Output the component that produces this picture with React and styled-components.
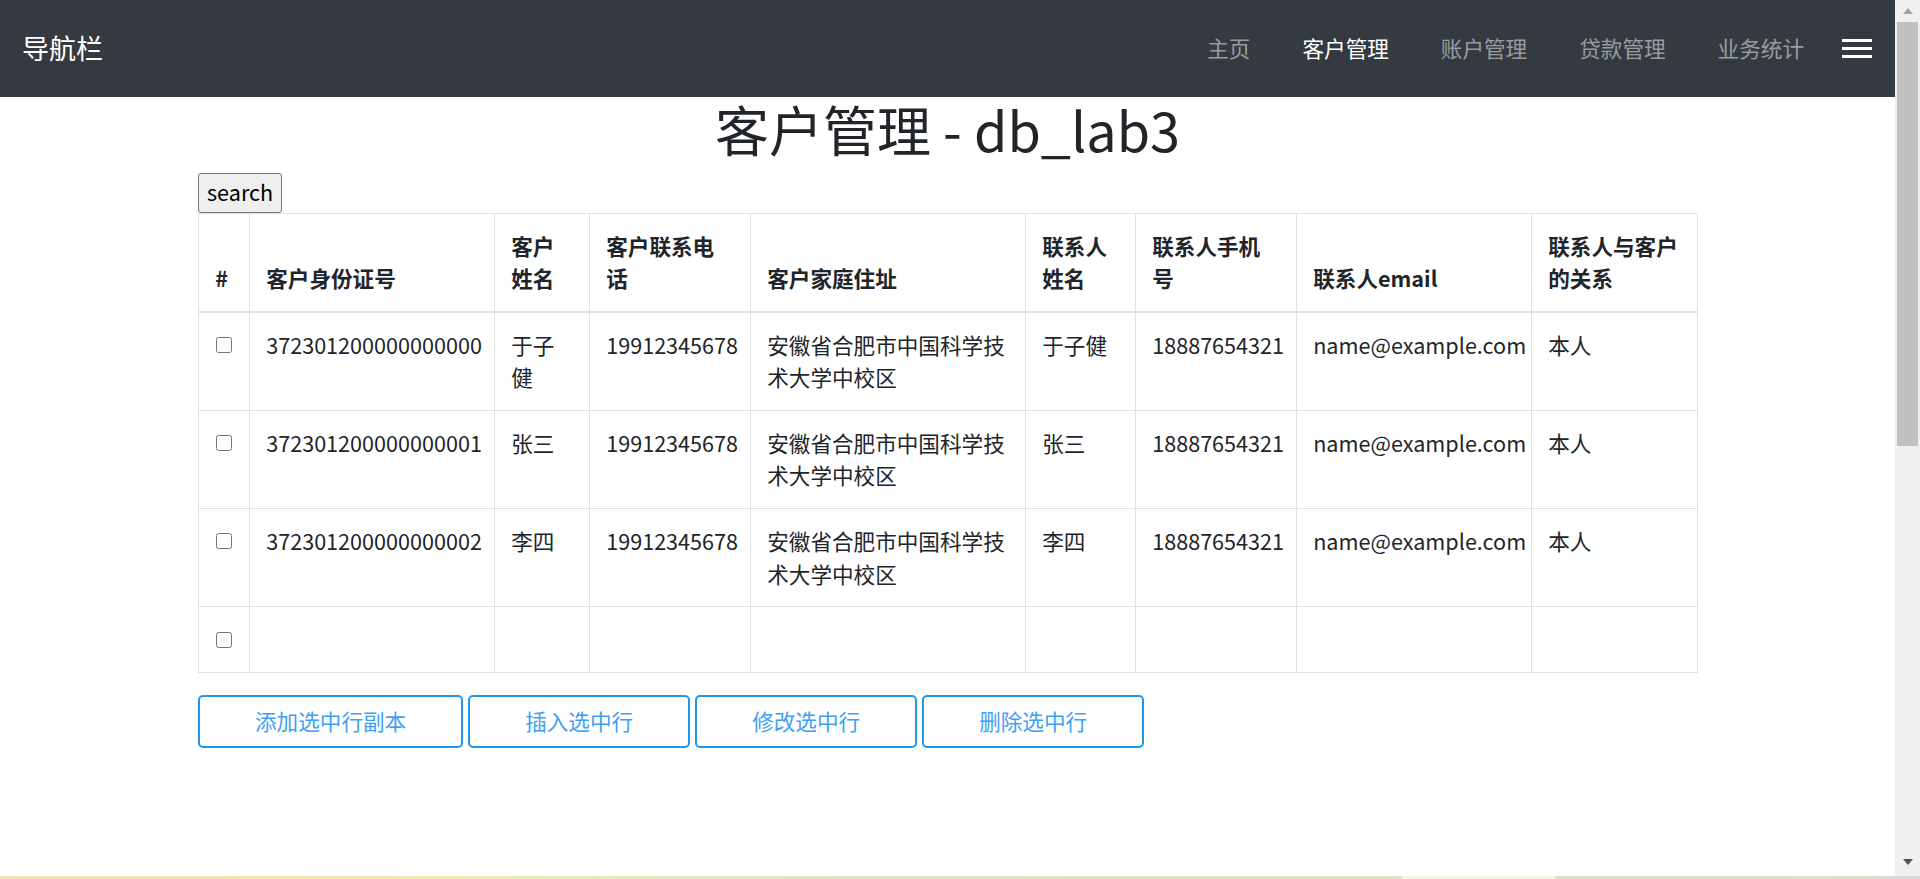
import React from 'react';
import styled, { createGlobalStyle } from 'styled-components';

const GlobalStyle = createGlobalStyle`
  *, *::before, *::after { box-sizing: border-box; }
  html, body { margin: 0; padding: 0; height: 100%; overflow: hidden; background: #fff; }
  body {
    font-family: "Noto Sans CJK SC", "Noto Sans", sans-serif;
    font-size: 21.6px;
    line-height: 1.5;
    color: #212529;
  }
  #root { height: 100%; }
`;

const Screen = styled.div`
  width: 1920px;
  height: 879px;
  display: flex;
  flex-direction: column;
`;

const Window = styled.div`
  flex: 1;
  min-height: 0;
  display: flex;
`;

const Page = styled.div`
  flex: 1;
  min-width: 0;
  overflow: hidden;
  background: #fff;
`;

const Scrollbar = styled.div`
  width: 25px;
  background: #f0f0f0;
  display: flex;
  flex-direction: column;
  align-items: center;
`;

const ArrowBox = styled.div`
  height: ${p => p.$h}px;
  width: 100%;
  display: flex;
  align-items: center;
  justify-content: center;
`;

const Arrow = styled.span`
  width: 0;
  height: 0;
  border-left: 5px solid transparent;
  border-right: 5px solid transparent;
  ${p => p.$down
    ? 'border-top: 6px solid #505050;'
    : 'border-bottom: 6px solid #a3a3a3;'}
`;

const Thumb = styled.div`
  width: 21px;
  height: 424px;
  background: #c1c1c1;
`;

const Spacer = styled.div`
  flex: 1;
`;

const TaskStrip = styled.div`
  height: 3px;
  background: linear-gradient(
    to right,
    #ece3b6 0%,
    #efe8aa 20%,
    #e4e9bb 32%,
    #dde4c6 45%,
    #dfe3c4 58%,
    #dfe3c4 73%,
    #f2f4e8 73%,
    #f2f4e8 81%,
    #dbe0c8 81%,
    #e0e0cc 95%,
    #d8d8d8 100%
  );
`;

const Navbar = styled.nav`
  height: 97px;
  background: #343a40;
  display: flex;
  align-items: center;
  padding: 0 23px 0 22px;
`;

const Brand = styled.a`
  color: #fff;
  font-size: 27px;
  line-height: 1.5;
  text-decoration: none;
`;

const NavList = styled.div`
  margin-left: auto;
  display: flex;
  align-items: center;
`;

const NavLink = styled.a`
  padding: 0 26px;
  font-size: 21.6px;
  line-height: 1.5;
  text-decoration: none;
  color: ${p => (p.$active ? '#ffffff' : 'rgba(255,255,255,0.5)')};
`;

const Toggler = styled.button`
  margin-left: 12px;
  width: 30px;
  padding: 0;
  border: 0;
  background: transparent;
  display: flex;
  flex-direction: column;
  gap: 5px;
`;

const Bar = styled.span`
  display: block;
  width: 30px;
  height: 3px;
  background: #fff;
`;

const Title = styled.h1`
  margin: 0 0 10.8px;
  font-size: 54px;
  line-height: 1.2;
  font-weight: 400;
  text-align: center;
  color: #212529;
`;

const Container = styled.div`
  width: 1539px;
  margin: 0 auto;
  padding: 0 20px;
`;

const Toolbar = styled.div`
  display: flex;
`;

const SearchButton = styled.button`
  font-family: inherit;
  font-size: 21.6px;
  line-height: 1.5;
  height: 40px;
  color: #000;
  background: #efefef;
  border: 1px solid #767676;
  border-radius: 3px;
  padding: 0 8px;
`;

const Table = styled.table`
  width: 100%;
  table-layout: fixed;
  border-collapse: collapse;
  border: 1px solid #dee2e6;
  margin-bottom: 21.6px;
`;

const Th = styled.th`
  padding: 16.2px;
  border: 1px solid #dee2e6;
  border-bottom: 2px solid #dee2e6;
  vertical-align: bottom;
  text-align: left;
  font-weight: 700;
`;

const Td = styled.td`
  padding: 16.2px;
  border: 1px solid #dee2e6;
  vertical-align: top;
  text-align: left;
`;

const CheckWrap = styled.div`
  height: 32.4px;
  display: flex;
  align-items: center;
  padding-left: 1px;
`;

const Check = styled.input`
  width: 16px;
  height: 16px;
  margin: 0;
`;

const Actions = styled.div`
  display: flex;
  gap: 5px;
`;

const ActionButton = styled.button`
  font-family: inherit;
  font-size: 21.6px;
  line-height: 1.5;
  height: 53px;
  padding: 0 55px;
  background: #fff;
  color: #3ea0f5;
  border: 2px solid #1f97f0;
  border-radius: 5px;
`;

const columns = [51, 245, 95, 161, 275, 110, 161, 235, 166];

const headers = [
  '#',
  '客户身份证号',
  '客户姓名',
  '客户联系电话',
  '客户家庭住址',
  '联系人姓名',
  '联系人手机号',
  '联系人email',
  '联系人与客户的关系',
];

const address = '安徽省合肥市中国科学技术大学中校区';

const rows = [
  ['372301200000000000', '于子健', '19912345678', address, '于子健', '18887654321', 'name@example.com', '本人'],
  ['372301200000000001', '张三', '19912345678', address, '张三', '18887654321', 'name@example.com', '本人'],
  ['372301200000000002', '李四', '19912345678', address, '李四', '18887654321', 'name@example.com', '本人'],
  ['', '', '', '', '', '', '', ''],
];

const navItems = ['主页', '客户管理', '账户管理', '贷款管理', '业务统计'];

export default function App() {
  return (
    <>
      <GlobalStyle />
      <Screen>
        <Window>
          <Page>
            <Navbar>
              <Brand href="#">导航栏</Brand>
              <NavList>
                {navItems.map(item => (
                  <NavLink key={item} href="#" $active={item === '客户管理'}>
                    {item}
                  </NavLink>
                ))}
              </NavList>
              <Toggler aria-label="menu">
                <Bar />
                <Bar />
                <Bar />
              </Toggler>
            </Navbar>
            <Title>客户管理 - db_lab3</Title>
            <Container>
              <Toolbar>
                <SearchButton>search</SearchButton>
              </Toolbar>
              <Table>
                <colgroup>
                  {columns.map((w, i) => (
                    <col key={i} style={{ width: w }} />
                  ))}
                </colgroup>
                <thead>
                  <tr>
                    {headers.map(h => (
                      <Th key={h}>{h}</Th>
                    ))}
                  </tr>
                </thead>
                <tbody>
                  {rows.map((r, ri) => (
                    <tr key={ri}>
                      <Td>
                        <CheckWrap>
                          <Check type="checkbox" />
                        </CheckWrap>
                      </Td>
                      {r.map((c, ci) => (
                        <Td key={ci}>{c}</Td>
                      ))}
                    </tr>
                  ))}
                </tbody>
              </Table>
              <Actions>
                <ActionButton>添加选中行副本</ActionButton>
                <ActionButton>插入选中行</ActionButton>
                <ActionButton>修改选中行</ActionButton>
                <ActionButton>删除选中行</ActionButton>
              </Actions>
            </Container>
          </Page>
          <Scrollbar>
            <ArrowBox $h={22}>
              <Arrow />
            </ArrowBox>
            <Thumb />
            <Spacer />
            <ArrowBox $h={28}>
              <Arrow $down />
            </ArrowBox>
          </Scrollbar>
        </Window>
        <TaskStrip />
      </Screen>
    </>
  );
}
